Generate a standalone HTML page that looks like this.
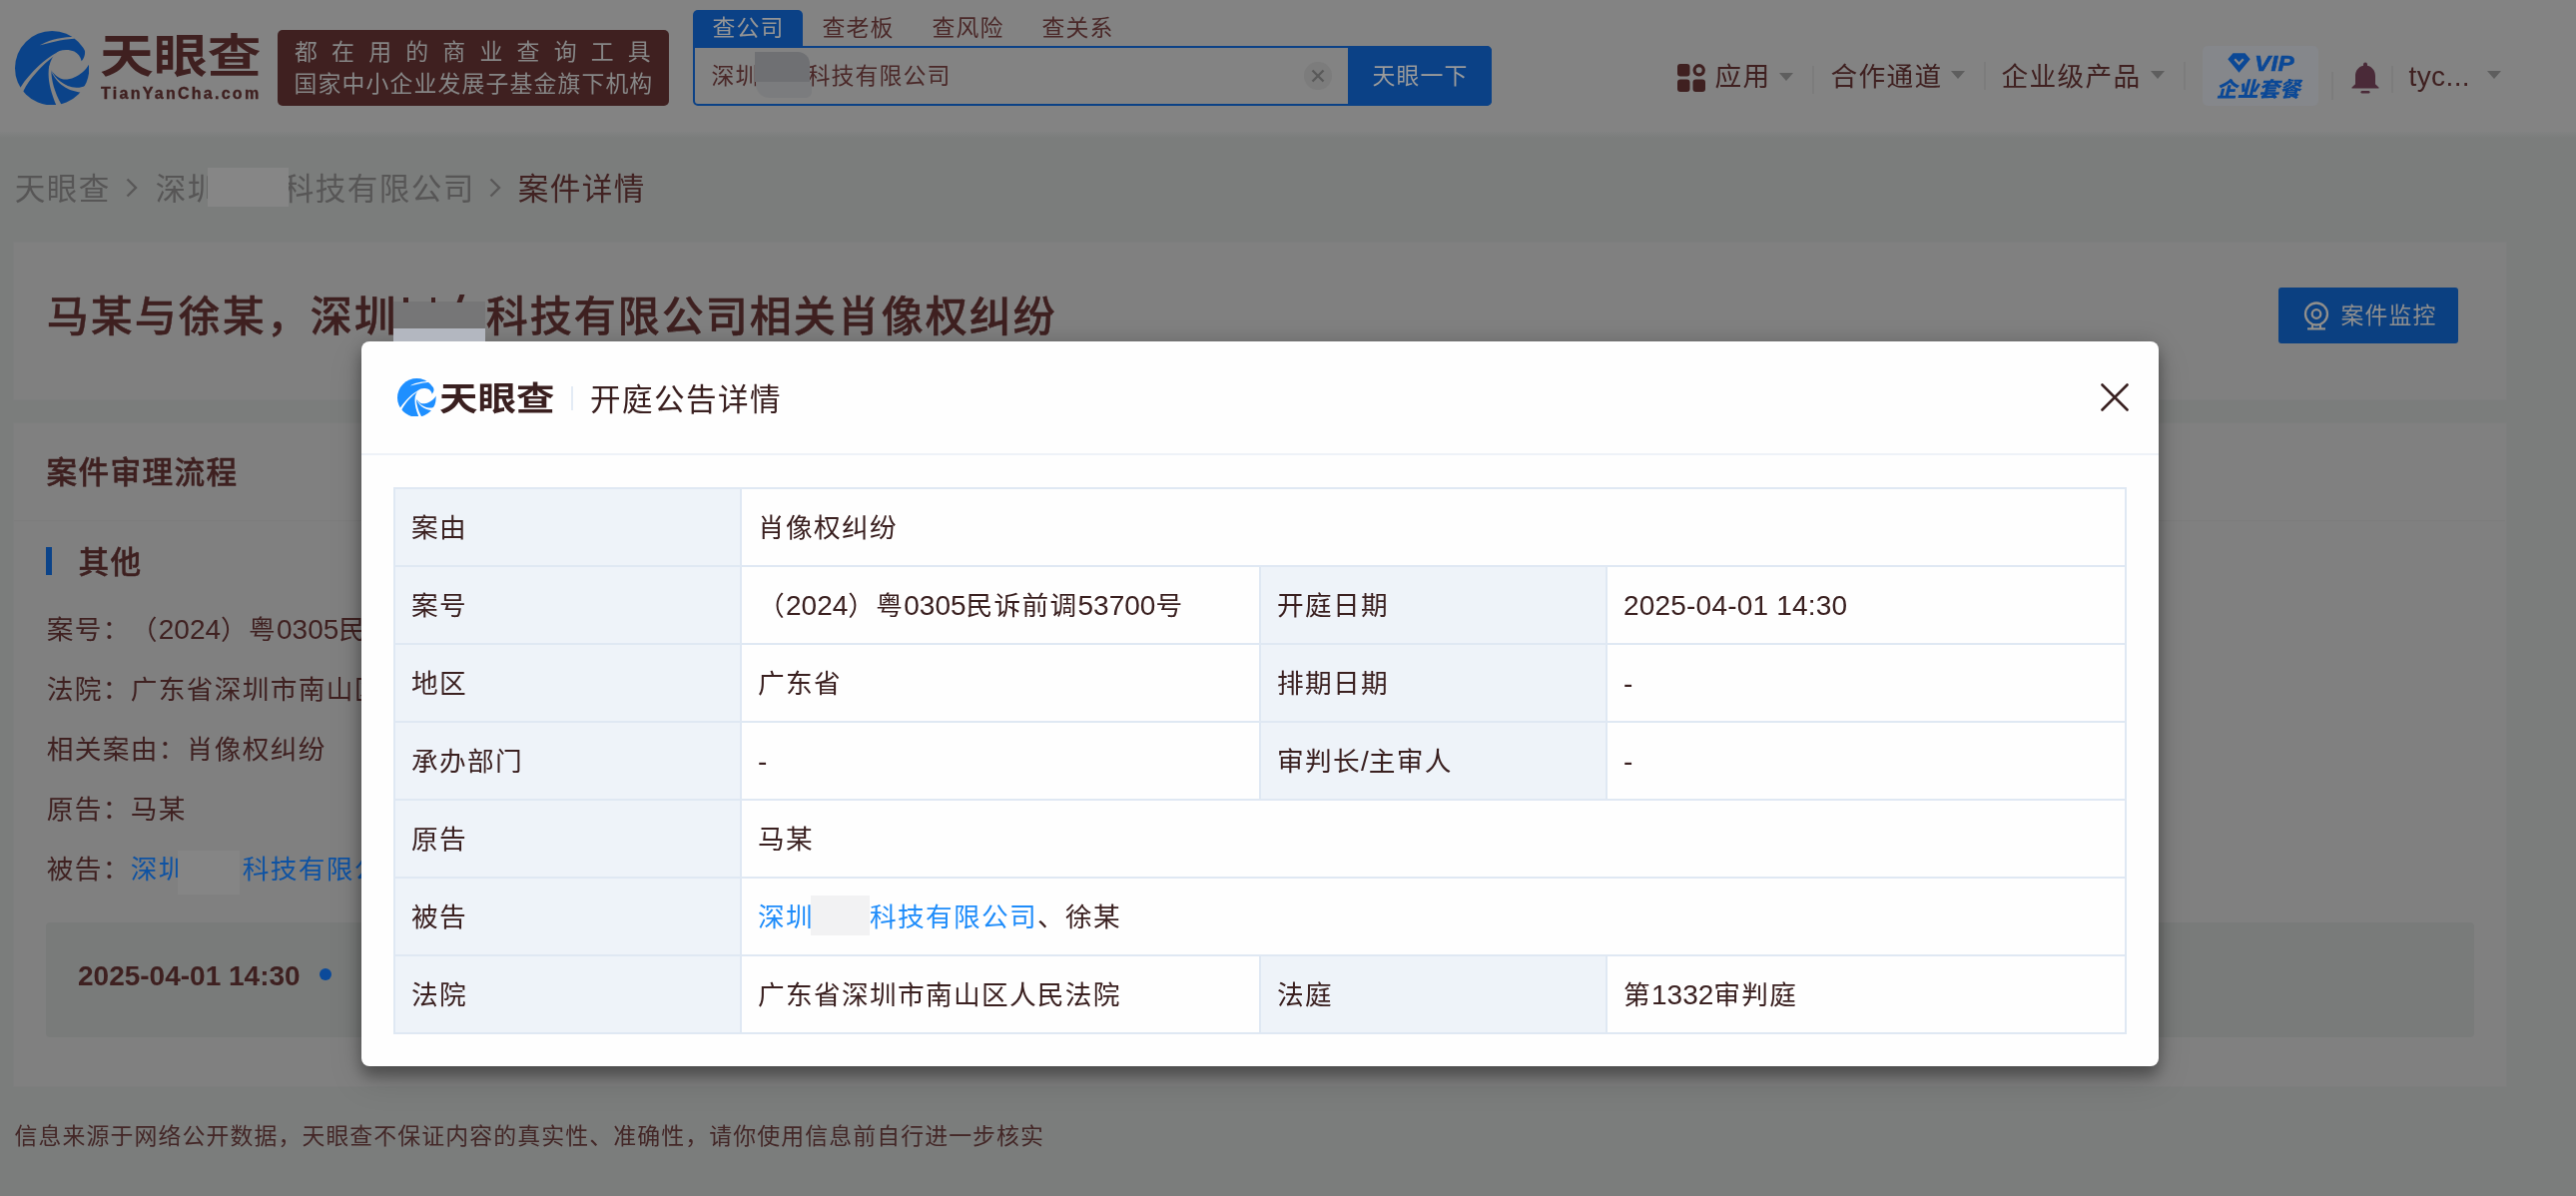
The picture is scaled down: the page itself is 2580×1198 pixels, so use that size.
<!DOCTYPE html>
<html lang="zh-CN">
<head>
<meta charset="utf-8">
<title>案件详情 - 天眼查</title>
<style>
*{margin:0;padding:0;box-sizing:border-box;}
html,body{width:2580px;height:1198px;overflow:hidden;}
body{text-spacing-trim:space-all;background:#7b7d7c;font-family:"Liberation Sans","Noto Sans CJK SC",sans-serif;color:#3e2020;position:relative;}
#root{position:absolute;left:0;top:0;width:2580px;height:1198px;overflow:hidden;will-change:transform;}
.abs{position:absolute;}
.t{position:absolute;white-space:nowrap;}
/* ---------- header ---------- */
#hdr{position:absolute;left:0;top:0;width:2580px;height:132px;background:#838383;}
#hdr:after{content:"";position:absolute;left:0;top:132px;width:2580px;height:6px;background:linear-gradient(#818282,#7b7d7c);}
#banner{left:278px;top:30px;width:392px;height:76px;background:#3f2020;border-radius:5px;color:#868686;font-size:22.900px;}
#banner .l1{left:17px;top:5.5px;line-height:32px;letter-spacing:14.200px;}
#banner .l2{left:16.500px;top:38px;line-height:32px;letter-spacing:1.1px;}
.tab{top:10px;width:110px;height:36px;line-height:37px;text-align:center;font-size:22.900px;letter-spacing:1.1px;text-indent:1.1px;color:#4a2828;}
.tab.on{background:#0b4186;color:#959595;border-radius:5px 5px 0 0;}
#sbox{left:694px;top:46px;width:800px;height:60px;border:2px solid #0b4186;border-radius:0 5px 5px 5px;}
#sbtn{left:1350px;top:46px;width:144px;height:60px;background:#0b4186;border-radius:0 5px 5px 0;color:#9b9b9b;font-size:22.900px;letter-spacing:1.1px;text-indent:1.1px;line-height:61px;text-align:center;}
.nav{font-size:26.700px;letter-spacing:1.3px;line-height:40px;color:#3f2020;}
.sep{position:absolute;width:2px;background:#7c7c7c;}
.tri{position:absolute;width:0;height:0;border-left:7.5px solid transparent;border-right:7.5px solid transparent;border-top:8.5px solid #5e5e5e;margin-top:-0.5px;}
/* ---------- page ---------- */
.card{position:absolute;background:#808080;border:1px solid #7d7e7e;}
.bc{font-size:30.600px;letter-spacing:1.4px;line-height:44px;color:#575656;top:166.800px;}
.row{font-size:26.700px;letter-spacing:1.3px;line-height:40px;color:#3f2121;left:46.800px;}
.lnk{color:#0e52a2;}
.red{display:inline-block;vertical-align:top;}
.sb{font-weight:500 !important;-webkit-text-stroke:0.45px currentColor;}

/* ---------- modal ---------- */
#modal{position:absolute;left:362px;top:342px;width:1800px;height:726px;background:#fefefe;border-radius:8px;box-shadow:0 10px 14px rgba(0,0,0,.28),0 14px 34px rgba(0,0,0,.14),0 0 22px rgba(0,0,0,.15);color:#3a2020;}
#mhl{position:absolute;left:0;top:112px;width:1800px;height:2px;background:#eef2f8;}
#tbl{position:absolute;left:32px;top:146px;width:1736px;height:548px;border:2px solid #dfe8f3;}
.cell{position:absolute;font-size:26.700px;letter-spacing:1.3px;line-height:78px;white-space:nowrap;padding-left:16px;}
.lab{background:#eef3f9;}
.n{position:relative;top:-0.5px;font-size:28px;letter-spacing:0;}
.hl{position:absolute;left:0;width:1732px;height:2px;background:#dfe8f3;}
.vl{position:absolute;width:2px;background:#dfe8f3;}
</style>
</head>
<body>
<div id="root">
<!-- ================= HEADER ================= -->
<div id="hdr">
  <!-- logo -->
  <svg class="abs" style="left:14.800px;top:30.700px" width="74.4" height="74.4" viewBox="92.500 90 1012 1012">
    <mask id="mk1" maskUnits="userSpaceOnUse" x="0" y="0" width="1223" height="1196">
      <circle cx="598.500" cy="596" r="506" fill="#fff"/>
      <g fill="#000">
        <path d="M1000 500 C985 440 950 395 900 370 C850 345 760 340 700 362 C675 372 655 385 640 402 C605 440 575 500 562 560 C556 590 565 615 585 628 C610 660 640 695 680 720 C700 735 720 745 740 748 C780 755 850 748 900 722 C980 690 1060 620 1097 552 L1140 552 L1140 360 L1045 360 C1050 410 1035 460 1000 500 Z"/>
        <path d="M648 394 C520 462 305 645 168 858 L135 880 L185 945 L205 912 C290 735 470 545 646 416 Z"/>
        <path d="M590 600 C578 700 615 900 725 1092 L745 1135 L665 1140 L655 1104 C570 900 528 720 560 560 Z"/>
        <path d="M585 620 C640 740 760 850 930 862 C970 864 1010 855 1050 838 L1090 860 L1010 965 L982 928 C850 900 700 860 590 650 Z"/>
        <path d="M430 285 C520 228 680 176 864 170 L885 150 L920 175 L896 194 C720 208 560 248 430 285 Z"/>
      </g>
    </mask>
    <rect x="92.500" y="90" width="1012" height="1012" fill="#0b4389" mask="url(#mk1)"/>
  </svg>
  <div class="t" id="logotxt" style="left:100px;top:24px;font-size:46px;line-height:64px;font-weight:700;color:#3f2020;transform-origin:0 50%;transform:scaleX(1.17);">天眼查</div>
  <div class="t" id="logoen" style="left:101px;top:82.5px;font-size:16px;line-height:22px;font-weight:700;color:#3f2020;-webkit-text-stroke:0.35px #3f2020;letter-spacing:2.27px;">TianYanCha.com</div>
  <!-- banner -->
  <div class="abs" id="banner">
    <div class="t l1">都在用的商业查询工具</div>
    <div class="t l2">国家中小企业发展子基金旗下机构</div>
  </div>
  <!-- search tabs -->
  <div class="abs tab on" style="left:694px">查公司</div>
  <div class="abs tab" style="left:804px">查老板</div>
  <div class="abs tab" style="left:914px">查风险</div>
  <div class="abs tab" style="left:1024px">查关系</div>
  <div class="abs" id="sbox"></div>
  <div class="t" style="left:712.500px;top:55.500px;font-size:22.900px;letter-spacing:1.1px;line-height:40px;color:#4a2828;">深圳<span class="red" style="width:48px;height:1px"></span>科技有限公司</div>
  <div class="abs" style="left:756px;top:52px;width:55px;height:30px;background:#6f7073;border-radius:0 12px 0 0;"></div>
  <div class="abs" style="left:757px;top:82px;width:56px;height:16px;background:#7b7c7e;border-radius:0 0 6px 14px;"></div>
  <div class="abs" style="left:1306px;top:62px;width:28px;height:28px;border-radius:50%;background:#7c7c7c;"></div>
  <svg class="abs" style="left:1313px;top:69px" width="14" height="14" viewBox="0 0 14 14"><path d="M1.5 1.5 L12.5 12.5 M12.5 1.5 L1.5 12.5" stroke="#5a5a5a" stroke-width="2.4" fill="none"/></svg>
  <div class="abs" id="sbtn">天眼一下</div>
  <!-- right nav -->
  <svg class="abs" style="left:1680px;top:64px" width="28" height="28" viewBox="0 0 28 28">
    <rect x="0" y="0" width="12.5" height="12.5" rx="3" fill="#3f2020"/>
    <rect x="0" y="15.5" width="12.5" height="12.5" rx="3" fill="#3f2020"/>
    <rect x="15.5" y="15.5" width="12.5" height="12.5" rx="3" fill="#3f2020"/>
    <circle cx="21.7" cy="6.3" r="4.6" fill="none" stroke="#3f2020" stroke-width="3.2"/>
  </svg>
  <div class="t nav" style="left:1717.500px;top:57px">应用</div>
  <div class="tri" style="left:1782px;top:73px"></div>
  <div class="sep" style="left:1815px;top:66px;height:28px"></div>
  <div class="t nav" style="left:1833.500px;top:57px">合作通道</div>
  <div class="tri" style="left:1954px;top:71px"></div>
  <div class="sep" style="left:1987px;top:62px;height:28px"></div>
  <div class="t nav" style="left:2004.600px;top:57px">企业级产品</div>
  <div class="tri" style="left:2154px;top:71px"></div>
  <div class="sep" style="left:2187px;top:62px;height:28px"></div>
  <div class="abs" id="vip" style="left:2206px;top:46px;width:116px;height:60px;border-radius:5px;background:#85878b;"></div>
  <svg class="abs" style="left:2230.500px;top:53px" width="23" height="20" viewBox="0 0 23 20">
    <path d="M5.5 0.2 H17.500 L22.700 6.2 L11.500 19.800 L0.3 6.2 Z" fill="#0b4896"/>
    <path d="M7.2 6.2 L11.500 10.800 L15.800 6.2" fill="none" stroke="#85878b" stroke-width="2.2"/>
  </svg>
  <div class="t" style="left:2257.500px;top:51.500px;font-size:22px;line-height:24px;font-weight:700;font-style:italic;color:#0b4896;-webkit-text-stroke:0.6px #0b4896;letter-spacing:0.3px;transform-origin:0 50%;transform:scaleX(1.1);">VIP</div>
  <div class="t" style="left:2219.500px;top:75.500px;font-size:21px;line-height:28px;font-weight:900;font-style:italic;color:#0b4896;letter-spacing:0.2px;">企业套餐</div>
  <div class="sep" style="left:2335px;top:72px;height:28px"></div>
  <svg class="abs" style="left:2355px;top:62px" width="28" height="32" viewBox="0 0 28 32">
    <path d="M14 0.5 a2 2 0 0 1 2 2 v1.2 c5 1.2 8 5 8 10.5 v8 l3.5 3.3 v1 H0.5 v-1 L4 22.2 v-8 c0 -5.500 3 -9.300 8 -10.500 v-1.200 a2 2 0 0 1 2 -2 Z" fill="#4a2a38"/>
    <rect x="9.5" y="29" width="9" height="2.4" rx="1.2" fill="#4a2a38"/>
  </svg>
  <div class="sep" style="left:2395px;top:66px;height:27px"></div>
  <div class="t nav" style="left:2412.500px;top:56.500px;font-size:28px;letter-spacing:0.4px">tyc...</div>
  <div class="tri" style="left:2491px;top:71px"></div>
</div>

<!-- ================= PAGE ================= -->
<div class="t bc" style="left:14.800px">天眼查</div>
<div class="t bc" style="left:155.800px">深圳<span class="red" style="width:64px;height:1px"></span>科技有限公司</div>
<div class="t bc" style="left:518.800px;color:#412222">案件详情</div>

<svg class="abs" style="left:126px;top:178px" width="12" height="20" viewBox="0 0 12 20"><path d="M1.5 1.5 L10 10 L1.5 18.500" fill="none" stroke="#595858" stroke-width="2.4"/></svg>
<svg class="abs" style="left:490px;top:178px" width="12" height="20" viewBox="0 0 12 20"><path d="M1.5 1.5 L10 10 L1.5 18.500" fill="none" stroke="#595858" stroke-width="2.4"/></svg>
<div class="abs" style="left:208px;top:168px;width:81px;height:39px;background:#868686;"></div>

<div class="card" id="c1" style="left:13px;top:242px;width:2498px;height:159px;"></div>
<div class="t sb" id="title" style="left:46.800px;top:285.500px;font-size:42px;letter-spacing:2px;line-height:64px;font-weight:700;color:#3e2020;">马某与徐某，深圳<span class="red" style="width:88px;height:1px"></span>科技有限公司相关肖像权纠纷</div>
<div class="abs" style="left:394px;top:302px;width:92px;height:27px;background:#767677;"></div>
<div class="abs" style="left:394px;top:329px;width:92px;height:13px;background:#b3b7c0;z-index:6;"></div>
<div class="abs" style="left:403.500px;top:297.500px;width:5px;height:5px;background:#3e2020;"></div>
<div class="abs" style="left:431.500px;top:297.500px;width:4.5px;height:5px;background:#3e2020;"></div>
<div class="abs" style="left:459px;top:294.500px;width:5px;height:8px;background:#3e2020;transform:skewX(-20deg);"></div>
<div class="abs" id="monbtn" style="left:2282px;top:288px;width:180px;height:56px;border-radius:3px;background:#0b4081;"></div>
<svg class="abs" style="left:2307px;top:302px" width="26" height="30" viewBox="0 0 26 30">
  <circle cx="13" cy="12.5" r="11" fill="none" stroke="#918f8c" stroke-width="2.3"/>
  <circle cx="13" cy="12.5" r="4.3" fill="none" stroke="#918f8c" stroke-width="2.3"/>
  <path d="M9.3 22.500 L8.8 27 M16.700 22.500 L17.200 27 M4 27.300 H22" fill="none" stroke="#918f8c" stroke-width="2.2"/>
</svg>
<div class="t" style="left:2344.500px;top:296px;font-size:22.900px;letter-spacing:1.1px;line-height:40px;color:#8f8f8f;">案件监控</div>

<div class="card" id="c2" style="left:13px;top:423px;width:2498px;height:666px;"></div>
<div class="t sb" style="left:46.500px;top:450px;font-size:30.600px;letter-spacing:1.4px;line-height:46px;font-weight:700;color:#3e2020;">案件审理流程</div>
<div class="abs" style="left:14px;top:520.500px;width:2495px;height:1.5px;background:#7c7c7c;"></div>
<div class="abs" style="left:46px;top:548px;width:6px;height:28px;background:#0b4389;"></div>
<div class="t sb" style="left:78.500px;top:539.500px;font-size:30.600px;letter-spacing:1.4px;line-height:46px;font-weight:700;color:#3e2020;">其他</div>
<div class="t row" style="top:611.300px">案号：（<span class="n">2024</span>）粤<span class="n">0305</span>民诉前调<span class="n">53700</span>号</div>
<div class="t row" style="top:671.300px">法院：广东省深圳市南山区人民法院</div>
<div class="t row" style="top:731.300px">相关案由：肖像权纠纷</div>
<div class="t row" style="top:791.300px">原告：马某</div>
<div class="t row" style="top:851.300px">被告：<span class="lnk">深圳<span class="red" style="width:56px;height:1px"></span>科技有限公司</span></div>
<div class="abs" style="left:178px;top:852px;width:62px;height:44px;background:#858585;"></div>
<div class="abs" id="tl" style="left:46px;top:924px;width:2432px;height:115px;background:#797b7a;border-radius:4px;"></div>
<div class="t" style="left:78px;top:958px;font-size:28px;line-height:40px;font-weight:700;color:#3e2020;">2025-04-01 14:30</div>
<div class="abs" style="left:320px;top:970px;width:12px;height:12px;border-radius:50%;background:#0b4a9a;"></div>
<div class="t" style="left:14.500px;top:1118px;font-size:22.900px;letter-spacing:1.1px;line-height:40px;color:#432727;">信息来源于网络公开数据，天眼查不保证内容的真实性、准确性，请你使用信息前自行进一步核实</div>

<!-- ================= MODAL ================= -->
<div id="modal">
  <svg class="abs" style="left:35.800px;top:36.600px" width="38.8" height="38.8" viewBox="92.500 90 1012 1012">
    <mask id="mk2" maskUnits="userSpaceOnUse" x="0" y="0" width="1223" height="1196">
      <circle cx="598.500" cy="596" r="506" fill="#fff"/>
      <g fill="#000">
        <path d="M1000 500 C985 440 950 395 900 370 C850 345 760 340 700 362 C675 372 655 385 640 402 C605 440 575 500 562 560 C556 590 565 615 585 628 C610 660 640 695 680 720 C700 735 720 745 740 748 C780 755 850 748 900 722 C980 690 1060 620 1097 552 L1140 552 L1140 360 L1045 360 C1050 410 1035 460 1000 500 Z"/>
        <path d="M648 394 C520 462 305 645 168 858 L135 880 L185 945 L205 912 C290 735 470 545 646 416 Z"/>
        <path d="M590 600 C578 700 615 900 725 1092 L745 1135 L665 1140 L655 1104 C570 900 528 720 560 560 Z"/>
        <path d="M585 620 C640 740 760 850 930 862 C970 864 1010 855 1050 838 L1090 860 L1010 965 L982 928 C850 900 700 860 590 650 Z"/>
        <path d="M430 285 C520 228 680 176 864 170 L885 150 L920 175 L896 194 C720 208 560 248 430 285 Z"/>
      </g>
    </mask>
    <rect x="92.500" y="90" width="1012" height="1012" fill="#1e8fff" mask="url(#mk2)"/>
  </svg>
  <div class="t" id="mlogotxt" style="left:78px;top:34.500px;font-size:33px;line-height:46px;font-weight:700;color:#3a2020;transform-origin:0 50%;transform:scaleX(1.165);">天眼查</div>
  <div class="abs" style="left:210px;top:45px;width:2px;height:24px;background:#e3ebf5;"></div>
  <div class="t" style="left:229px;top:35px;font-size:30.600px;letter-spacing:1.4px;line-height:46px;font-weight:400;color:#3a2020;">开庭公告详情</div>
  <svg class="abs" style="left:1742px;top:42px" width="28" height="28" viewBox="0 0 28 28"><path d="M1.5 1.5 L26.500 26.500 M26.500 1.5 L1.5 26.500" stroke="#3a2222" stroke-width="2.6" fill="none" stroke-linecap="round"/></svg>
  <div id="mhl"></div>
  <div class="abs" style="left:450px;top:555px;width:59px;height:40px;background:#f2f2f3;z-index:2"></div>
  <div id="tbl">
    <div class="cell lab" style="left:0px;top:0px;width:345px;height:76px">案由</div>
    <div class="cell" style="left:347px;top:0px;width:1385px;height:76px">肖像权纠纷</div>
    <div class="hl" style="top:76px"></div>
    <div class="cell lab" style="left:0px;top:78px;width:345px;height:76px">案号</div>
    <div class="cell" style="left:347px;top:78px;width:518px;height:76px">（<span class="n">2024</span>）粤<span class="n">0305</span>民诉前调<span class="n">53700</span>号</div>
    <div class="cell lab" style="left:867px;top:78px;width:345px;height:76px">开庭日期</div>
    <div class="cell" style="left:1214px;top:78px;width:518px;height:76px"><span class="n" style="letter-spacing:0.2px">2025-04-01 14:30</span></div>
    <div class="vl" style="left:865px;top:78px;height:76px"></div>
    <div class="vl" style="left:1212px;top:78px;height:76px"></div>
    <div class="hl" style="top:154px"></div>
    <div class="cell lab" style="left:0px;top:156px;width:345px;height:76px">地区</div>
    <div class="cell" style="left:347px;top:156px;width:518px;height:76px">广东省</div>
    <div class="cell lab" style="left:867px;top:156px;width:345px;height:76px">排期日期</div>
    <div class="cell" style="left:1214px;top:156px;width:518px;height:76px"><span class="n">-</span></div>
    <div class="vl" style="left:865px;top:156px;height:76px"></div>
    <div class="vl" style="left:1212px;top:156px;height:76px"></div>
    <div class="hl" style="top:232px"></div>
    <div class="cell lab" style="left:0px;top:234px;width:345px;height:76px">承办部门</div>
    <div class="cell" style="left:347px;top:234px;width:518px;height:76px"><span class="n">-</span></div>
    <div class="cell lab" style="left:867px;top:234px;width:345px;height:76px">审判长<span class="n">/</span>主审人</div>
    <div class="cell" style="left:1214px;top:234px;width:518px;height:76px"><span class="n">-</span></div>
    <div class="vl" style="left:865px;top:234px;height:76px"></div>
    <div class="vl" style="left:1212px;top:234px;height:76px"></div>
    <div class="hl" style="top:310px"></div>
    <div class="cell lab" style="left:0px;top:312px;width:345px;height:76px">原告</div>
    <div class="cell" style="left:347px;top:312px;width:1385px;height:76px">马某</div>
    <div class="hl" style="top:388px"></div>
    <div class="cell lab" style="left:0px;top:390px;width:345px;height:76px">被告</div>
    <div class="cell" style="left:347px;top:390px;width:1385px;height:76px"><span style="color:#1e8cfa">深圳<span class="red" style="width:56px;height:1px"></span>科技有限公司</span>、徐某</div>
    <div class="hl" style="top:466px"></div>
    <div class="cell lab" style="left:0px;top:468px;width:345px;height:76px">法院</div>
    <div class="cell" style="left:347px;top:468px;width:518px;height:76px">广东省深圳市南山区人民法院</div>
    <div class="cell lab" style="left:867px;top:468px;width:345px;height:76px">法庭</div>
    <div class="cell" style="left:1214px;top:468px;width:518px;height:76px">第<span class="n">1332</span>审判庭</div>
    <div class="vl" style="left:865px;top:468px;height:76px"></div>
    <div class="vl" style="left:1212px;top:468px;height:76px"></div>
    <div class="vl" style="left:345px;top:0;height:544px"></div>
  </div>
</div>

</div>
</body>
</html>
